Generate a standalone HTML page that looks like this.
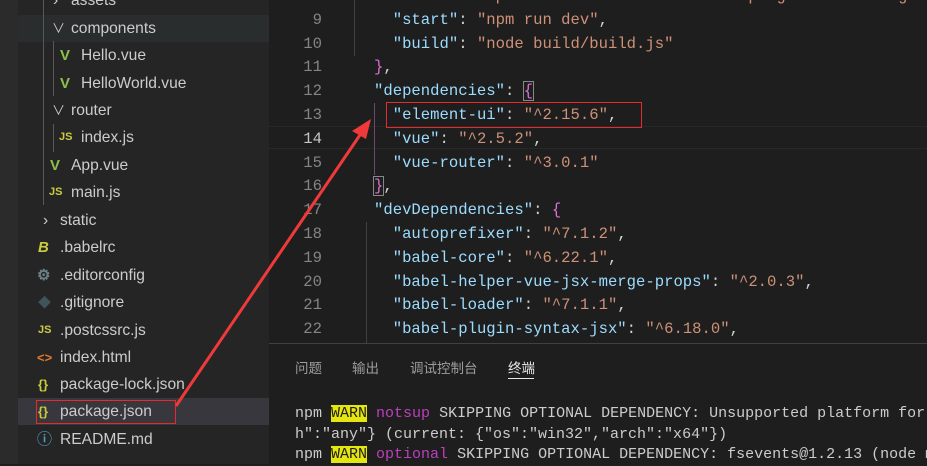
<!DOCTYPE html><html><head><meta charset="utf-8"><style>
*{margin:0;padding:0;box-sizing:border-box}
body{width:927px;height:464px;overflow:hidden;background:#1e1e1e;position:relative;font-family:"Liberation Sans","Noto Sans CJK SC",sans-serif}
#side{position:absolute;left:0;top:0;width:269px;height:464px;background:#252526}
#strip{position:absolute;left:0;top:0;width:18px;height:464px;background:#2b2b2b}
.r{position:absolute;left:18px;width:251px;height:27px;color:#cccccc;font-size:15.6px;line-height:27px;white-space:nowrap}
.r span.i{position:absolute;top:0;font-size:13px;font-weight:bold}
.g{position:absolute;width:1px;background:#585858}
.code{position:absolute;left:0;font-family:"Liberation Mono",monospace;font-size:15.6px;white-space:pre;line-height:23.8px}
.ln{position:absolute;left:270px;width:52px;text-align:right;color:#858585;font-family:"Liberation Mono",monospace;font-size:15.6px;line-height:23.8px}
.k{color:#9cdcfe}.s{color:#ce9178}.p{color:#d4d4d4}.b{color:#da70d6}
.t{position:absolute;left:295px;font-family:"Liberation Mono",monospace;font-size:15px;color:#cccccc;white-space:pre;line-height:20.5px}
.w{background:#e5e510;color:#1e1e1e}.m{color:#bc3fbc}
</style></head><body>
<div id="side"></div><div id="strip"></div>
<div class="r" style="top:15px;background:#2a2d2e"></div>
<div class="r" style="top:398px;background:#37373d"></div>
<div class="g" style="left:43px;top:0;height:205px"></div>
<div class="g" style="left:53px;top:41px;height:55px"></div>
<div class="g" style="left:53px;top:124px;height:28px"></div>
<div class="r" style="top:-13px"><span style="position:absolute;left:35px;color:#ccc">›</span><span style="position:absolute;left:53px">assets</span></div>
<div class="r" style="top:15px"><span style="position:absolute;left:34px;font-size:13px">∨</span><span style="position:absolute;left:53px">components</span></div>
<div class="r" style="top:42px"><span class="i" style="left:42px;color:#8dc149;font-size:15px">V</span><span style="position:absolute;left:63px">Hello.vue</span></div>
<div class="r" style="top:70px"><span class="i" style="left:42px;color:#8dc149;font-size:15px">V</span><span style="position:absolute;left:63px">HelloWorld.vue</span></div>
<div class="r" style="top:97px"><span style="position:absolute;left:34px;font-size:13px">∨</span><span style="position:absolute;left:53px">router</span></div>
<div class="r" style="top:124px"><span class="i" style="left:41px;color:#cbcb41;font-size:11px">JS</span><span style="position:absolute;left:63px">index.js</span></div>
<div class="r" style="top:152px"><span class="i" style="left:32px;color:#8dc149;font-size:15px">V</span><span style="position:absolute;left:53px">App.vue</span></div>
<div class="r" style="top:179px"><span class="i" style="left:31px;color:#cbcb41;font-size:11px">JS</span><span style="position:absolute;left:53px">main.js</span></div>
<div class="r" style="top:207px"><span style="position:absolute;left:25px">›</span><span style="position:absolute;left:42px">static</span></div>
<div class="r" style="top:234px"><span class="i" style="left:20px;color:#cbcb41;font-style:italic;font-size:15px">B</span><span style="position:absolute;left:42px">.babelrc</span></div>
<div class="r" style="top:262px"><span class="i" style="left:19px;color:#6d8086;font-size:15px">⚙</span><span style="position:absolute;left:42px">.editorconfig</span></div>
<div class="r" style="top:289px"><span class="i" style="left:20px;color:#41535b;font-size:13px">◆</span><span style="position:absolute;left:42px">.gitignore</span></div>
<div class="r" style="top:317px"><span class="i" style="left:20px;color:#cbcb41;font-size:11px">JS</span><span style="position:absolute;left:42px">.postcssrc.js</span></div>
<div class="r" style="top:344px"><span class="i" style="left:19px;color:#e37933">&lt;&gt;</span><span style="position:absolute;left:42px">index.html</span></div>
<div class="r" style="top:371px"><span class="i" style="left:20px;color:#cbcb41">{}</span><span style="position:absolute;left:42px">package-lock.json</span></div>
<div class="r" style="top:398px"><span class="i" style="left:20px;color:#cbcb41">{}</span><span style="position:absolute;left:42px">package.json</span></div>
<div class="r" style="top:426px"><span class="i" style="left:19px;color:#519aba;font-size:15px">ⓘ</span><span style="position:absolute;left:42px">README.md</span></div>
<div style="position:absolute;left:36px;top:400px;width:140px;height:24px;border:1.5px solid #e52b2b"></div>

<div style="position:absolute;left:269px;top:126px;width:658px;height:23px;border-top:1px solid #282828;border-bottom:1px solid #282828"></div>
<div class="g" style="left:354px;top:0;height:56px;background:#404040"></div>
<div class="g" style="left:374px;top:103px;height:72px;background:#6a4a6a"></div>
<div class="g" style="left:366px;top:222px;height:123px;background:#404040"></div>
<div class="ln" style="top:-15px">8<br>9<br>10<br>11<br>12<br>13<br><span style="color:#c6c6c6">14</span><br>15<br>16<br>17<br>18<br>19<br>20<br>21<br>22</div>
<div class="code" style="left:374px;top:-15px"><span class="p">  </span><span class="k">"dev"</span><span class="p">: </span><span class="s">"webpack-dev-server --inline --progress --config</span>
<span class="p">  </span><span class="k">"start"</span><span class="p">: </span><span class="s">"npm run dev"</span><span class="p">,</span>
<span class="p">  </span><span class="k">"build"</span><span class="p">: </span><span class="s">"node build/build.js"</span>
<span class="b">}</span><span class="p">,</span>
<span class="k">"dependencies"</span><span class="p">: </span><span class="b" style="outline:1px solid #888">{</span>
<span class="p">  </span><span class="k">"element-ui"</span><span class="p">: </span><span class="s">"^2.15.6"</span><span class="p">,</span>
<span class="p">  </span><span class="k">"vue"</span><span class="p">: </span><span class="s">"^2.5.2"</span><span class="p">,</span>
<span class="p">  </span><span class="k">"vue-router"</span><span class="p">: </span><span class="s">"^3.0.1"</span>
<span class="b" style="outline:1px solid #888">}</span><span class="p">,</span>
<span class="k">"devDependencies"</span><span class="p">: </span><span class="b">{</span>
<span class="p">  </span><span class="k">"autoprefixer"</span><span class="p">: </span><span class="s">"^7.1.2"</span><span class="p">,</span>
<span class="p">  </span><span class="k">"babel-core"</span><span class="p">: </span><span class="s">"^6.22.1"</span><span class="p">,</span>
<span class="p">  </span><span class="k">"babel-helper-vue-jsx-merge-props"</span><span class="p">: </span><span class="s">"^2.0.3"</span><span class="p">,</span>
<span class="p">  </span><span class="k">"babel-loader"</span><span class="p">: </span><span class="s">"^7.1.1"</span><span class="p">,</span>
<span class="p">  </span><span class="k">"babel-plugin-syntax-jsx"</span><span class="p">: </span><span class="s">"^6.18.0"</span><span class="p">,</span></div>
<div style="position:absolute;left:386px;top:102px;width:256px;height:26px;border:1.5px solid #e52b2b"></div>

<div style="position:absolute;left:269px;top:343px;width:658px;height:121px;background:#1e1e1e;border-top:1px solid #414141"></div>
<div style="position:absolute;top:357px;left:295px;font-size:13.5px;color:#9d9d9d;font-family:'Noto Sans CJK SC',sans-serif">问题</div>
<div style="position:absolute;top:357px;left:352px;font-size:13.5px;color:#9d9d9d;font-family:'Noto Sans CJK SC',sans-serif">输出</div>
<div style="position:absolute;top:357px;left:410px;font-size:13.5px;color:#9d9d9d;font-family:'Noto Sans CJK SC',sans-serif">调试控制台</div>
<div style="position:absolute;top:357px;left:508px;font-size:13.5px;color:#e7e7e7;font-family:'Noto Sans CJK SC',sans-serif">终端</div>
<div style="position:absolute;top:378px;left:508px;width:26px;height:1px;background:#e7e7e7"></div>
<div class="t" style="top:404px">npm <span class="w">WARN</span> <span class="m">notsup</span> SKIPPING OPTIONAL DEPENDENCY: Unsupported platform for
h":"any"} (current: {"os":"win32","arch":"x64"})
npm <span class="w">WARN</span> <span class="m">optional</span> SKIPPING OPTIONAL DEPENDENCY: fsevents@1.2.13 (node m</div>

<svg style="position:absolute;left:0;top:0" width="927" height="464"><line x1="176" y1="406" x2="362" y2="132" stroke="#f03a3a" stroke-width="3"/><polygon points="371,119 352,131 366,139" fill="#f03a3a"/></svg>
</body></html>
